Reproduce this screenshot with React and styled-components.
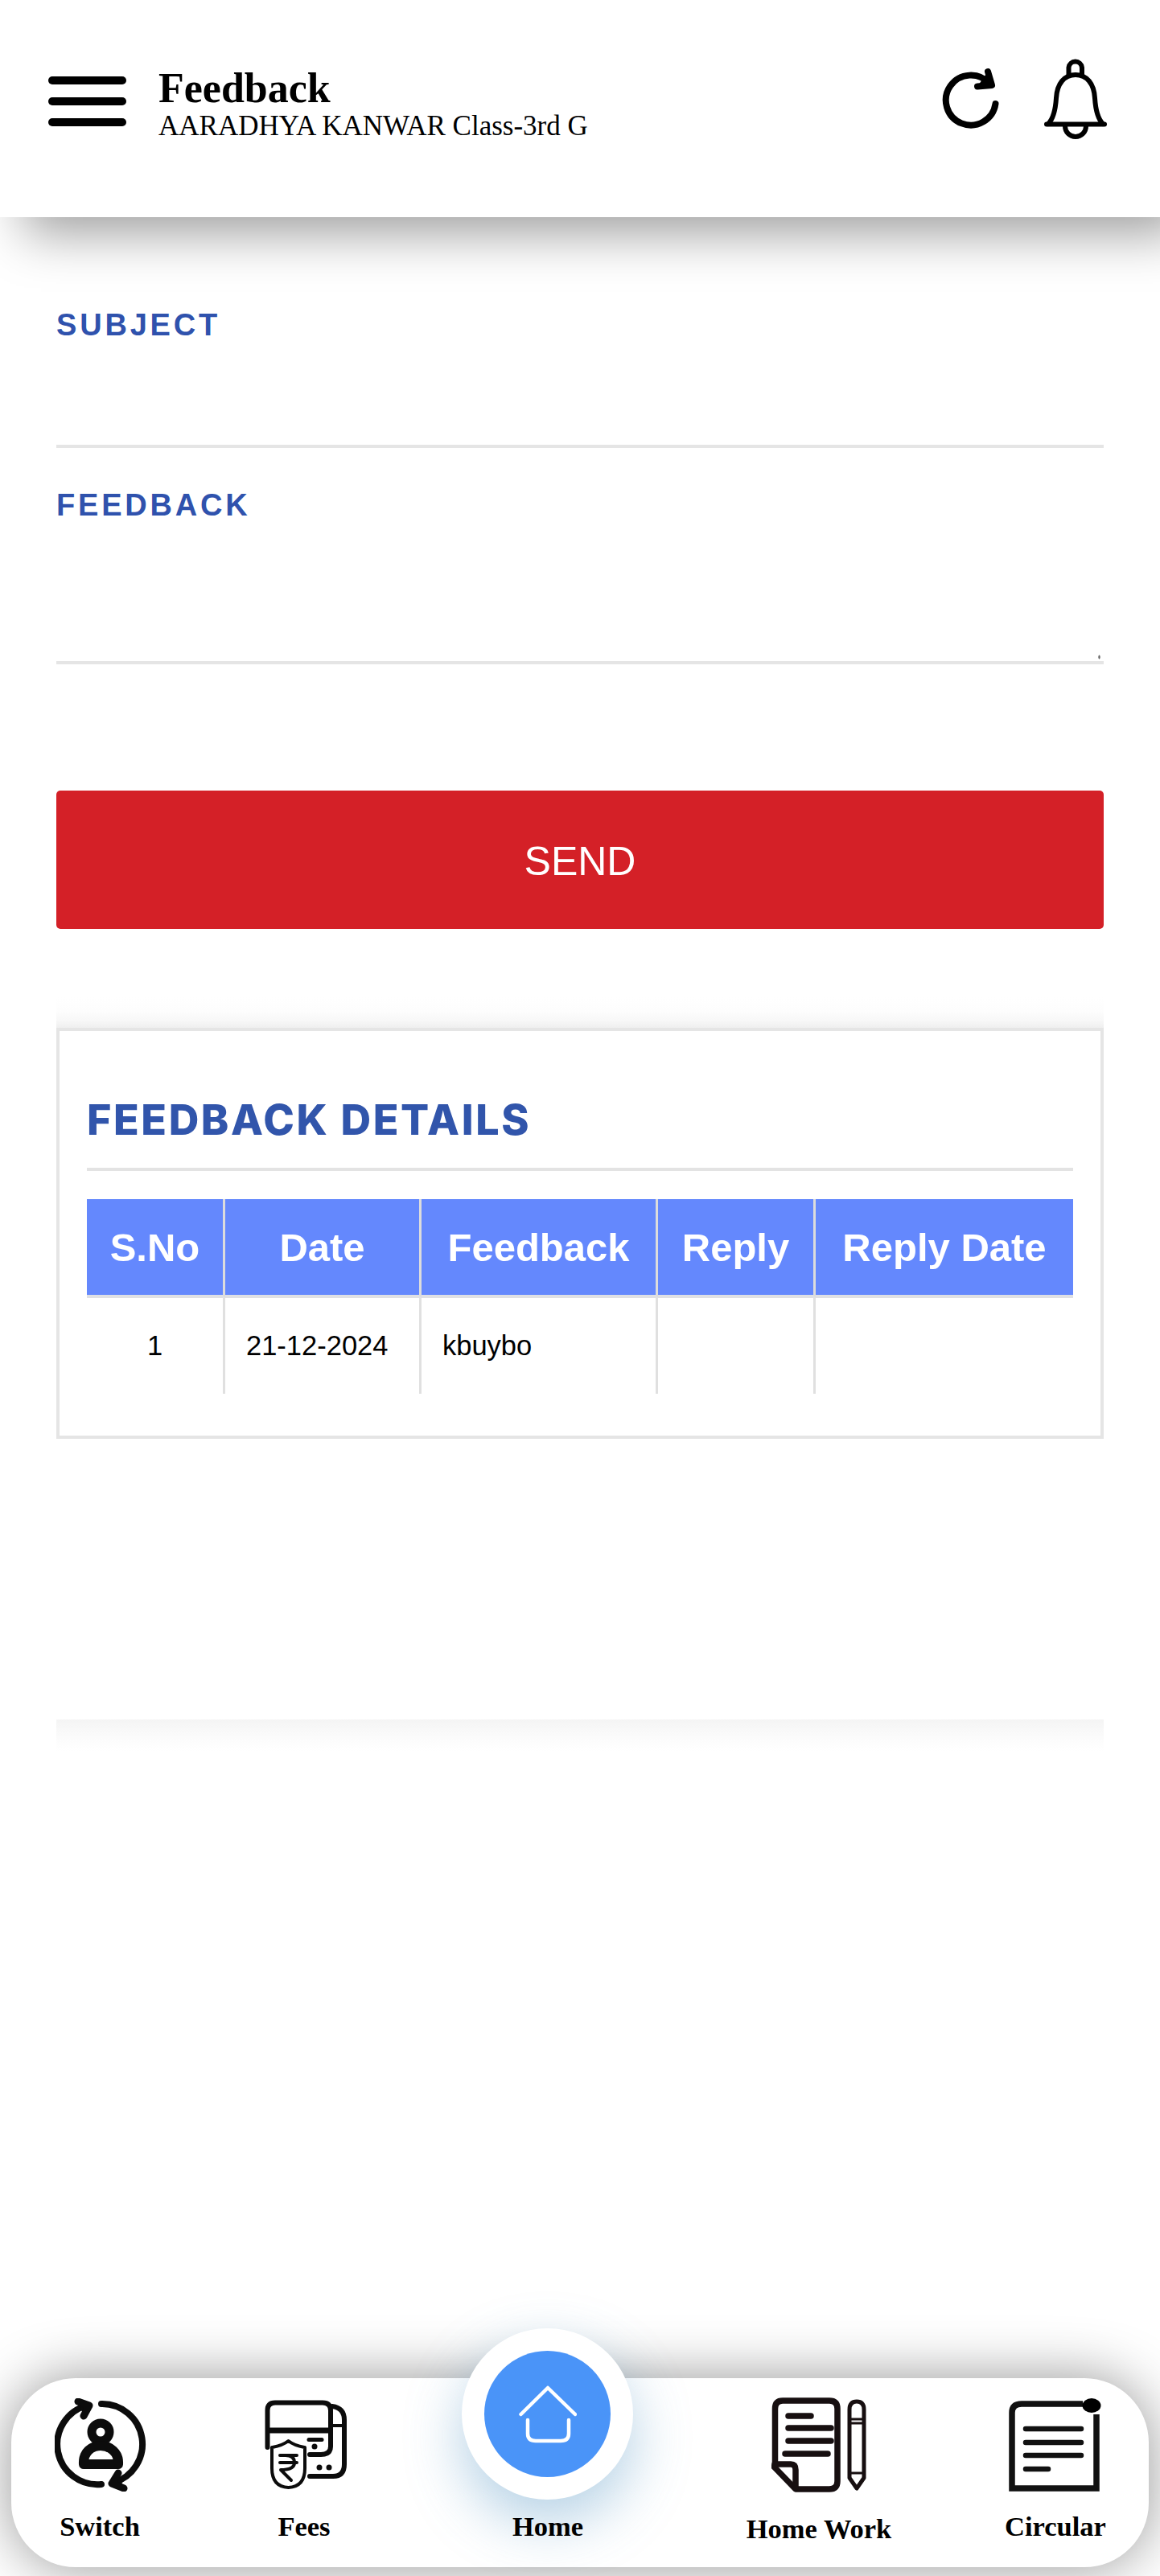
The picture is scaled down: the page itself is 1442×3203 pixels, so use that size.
import React from 'react';
import styled, { createGlobalStyle } from 'styled-components';

const GlobalStyle = createGlobalStyle`
  html, body {
    margin: 0;
    padding: 0;
    background: #fff;
  }
  * {
    box-sizing: border-box;
  }
`;

const Page = styled.div`
  display: flex;
  flex-direction: column;
  width: 1442px;
  height: 3203px;
  overflow: hidden;
  background: #fff;
  font-family: "Liberation Sans", Arial, sans-serif;
`;

const Header = styled.header`
  position: relative;
  z-index: 2;
  flex: none;
  display: flex;
  align-items: flex-start;
  height: 270px;
  padding: 0 63px 0 60px;
  background: #fff;
  box-shadow: 30px 20px 60px rgba(0, 0, 0, 0.38);
`;

const Burger = styled.div`
  display: flex;
  flex-direction: column;
  gap: 16px;
  width: 97px;
  margin-top: 95px;
`;

const BurgerBar = styled.span`
  display: block;
  height: 10px;
  border-radius: 5px;
  background: #000;
`;

const TitleBlock = styled.div`
  flex: 1;
  margin: 81px 0 0 40px;
  font-family: "Liberation Serif", "Times New Roman", serif;
  color: #000;
`;

const Title = styled.div`
  font-size: 52px;
  font-weight: 700;
  line-height: 58px;
`;

const Subtitle = styled.div`
  font-size: 35px;
  line-height: 40px;
  margin-top: -2px;
`;

const HeaderIcons = styled.div`
  display: flex;
  align-items: flex-start;
  gap: 50px;
  margin-top: 70px;
`;

const HeaderIcon = styled.svg`
  display: block;
  margin-top: ${(p) => p.$top || 0}px;
  fill: none;
  stroke: #000;
  stroke-linecap: round;
  stroke-linejoin: round;
`;

const FormArea = styled.main`
  flex: 1;
  display: flex;
  flex-direction: column;
  padding: 0 70px;
`;

const FieldLabel = styled.label`
  display: block;
  height: 44px;
  margin-top: ${(p) => p.$top}px;
  font-size: 38px;
  line-height: 44px;
  font-weight: 700;
  letter-spacing: 3.8px;
  color: #2f52ad;
`;

const TextInput = styled.input`
  display: block;
  width: 100%;
  height: 131px;
  padding: 0;
  border: 0;
  border-bottom: 4px solid #e5e5e5;
  outline: none;
  background: transparent;
`;

const TextArea = styled.textarea`
  display: block;
  width: 100%;
  height: 176px;
  padding: 0;
  border: 0;
  border-bottom: 4px solid #e5e5e5;
  outline: none;
  background: transparent;

  &::-webkit-resizer {
    background: radial-gradient(ellipse at center, #666 35%, transparent 75%) no-repeat 8px 7px / 3px 6px;
  }
`;

const SendButton = styled.button`
  display: block;
  width: 100%;
  height: 172px;
  margin-top: 157px;
  padding: 3px 0 0;
  border: 0;
  border-radius: 5px;
  background: #d42027;
  color: #fff;
  font-family: inherit;
  font-size: 50px;
`;

const ShadowBand = styled.section`
  height: 938px;
  margin-top: 85px;
  padding-top: 38px;
  background:
    linear-gradient(to bottom, #fff, #fdfdfd 45%, #f8f8f8 75%, #efefef) top / 100% 38px no-repeat,
    linear-gradient(to top, #fff, #fcfcfc 35%, #f8f8f8 70%, #f4f4f4) bottom / 100% 40px no-repeat;
`;

const Card = styled.div`
  height: 511px;
  padding: 0 34px;
  border: 4px solid #e5e5e5;
  background: #fff;
`;

const CardTitle = styled.h2`
  height: 174px;
  margin: 0;
  padding-top: 81px;
  border-bottom: 4px solid #e3e3e3;
  font-family: Inter, "Liberation Sans", sans-serif;
  font-size: 52px;
  line-height: 60px;
  font-weight: 800;
  letter-spacing: 2.6px;
  white-space: nowrap;
  color: #3155ab;
`;

const Table = styled.table`
  width: 1226px;
  margin-top: 35px;
  border-collapse: separate;
  border-spacing: 0;
  table-layout: fixed;
`;

const HeadCell = styled.th`
  width: ${(p) => p.$width}px;
  height: 123px;
  padding: 0;
  border-right: ${(p) => (p.$last ? 0 : 3)}px solid #dcdcdc;
  border-bottom: 4px solid #dfe0e4;
  background: #6488fd;
  color: #fff;
  font-size: 49px;
  font-weight: 700;
  text-align: center;
`;

const BodyCell = styled.td`
  height: 119px;
  padding: ${(p) => (p.$center ? 0 : '0 0 0 26px')};
  border-right: ${(p) => (p.$last ? 0 : 3)}px solid #e0e0e0;
  color: #000;
  font-size: 34.5px;
  text-align: ${(p) => (p.$center ? 'center' : 'left')};
`;

const BottomNav = styled.nav`
  position: relative;
  flex: none;
  display: grid;
  grid-template-columns: 220px 288px 318px 356px 232px;
  height: 235px;
  margin: 0 14px 11px;
  padding-top: 24px;
  border-radius: 80px;
  background: #fff;
  box-shadow: 0 0 70px rgba(0, 0, 0, 0.42);
`;

const NavItem = styled.div`
  position: relative;
  display: flex;
  flex-direction: column;
  align-items: center;
`;

const NavIconSlot = styled.div`
  display: flex;
  align-items: center;
  justify-content: center;
  height: 118px;
  padding-left: ${(p) => p.$nudge || 0}px;
`;

const NavIcon = styled.svg`
  display: block;
  fill: none;
  stroke: ${(p) => p.$color || '#0c0c0c'};
  stroke-linecap: round;
  stroke-linejoin: round;
`;

const NavLabel = styled.span`
  position: relative;
  padding-top: ${(p) => 22 + (p.$shift || 0)}px;
  font-family: "Liberation Serif", "Times New Roman", serif;
  font-size: 34.5px;
  line-height: 40px;
  font-weight: 700;
  color: #000;
`;

const HomeRing = styled.div`
  position: absolute;
  top: -86px;
  left: 52px;
  display: flex;
  align-items: center;
  justify-content: center;
  width: 213px;
  height: 213px;
  border-radius: 50%;
  background: #fff;
  box-shadow: 0 28px 70px rgba(70, 140, 190, 0.4);
`;

const HomeDisc = styled.div`
  display: flex;
  align-items: center;
  justify-content: center;
  width: 157px;
  height: 157px;
  border-radius: 50%;
  background: #4a94f8;
`;

function RefreshIcon() {
  return (
    <HeaderIcon $top={10} width="75" height="80" viewBox="0 0 75 80" strokeWidth="8">
      <path d="M67.5 49A31 31 0 1 1 60 24" />
      <path d="M58 9L63 26L45 27.5" fill="#000" />
    </HeaderIcon>
  );
}

function BellIcon() {
  return (
    <HeaderIcon width="84" height="104" viewBox="0 0 84 104" strokeWidth="6">
      <path d="M33.5 24V14A8.3 8.3 0 0 1 50 14V24" />
      <path d="M8 84C14 78 17 68 18 52C19 34 28 23 42 23C56 23 65 34 66 52C67 68 70 78 76 84" />
      <path d="M6 84.5H78" />
      <path d="M29 87A13 13 0 0 0 55 87" />
    </HeaderIcon>
  );
}

function SwitchIcon() {
  return (
    <NavIcon width="115" height="116" viewBox="0 0 115 116" strokeWidth="8">
      <path d="M58 7A50 50 0 0 1 73 105" />
      <path d="M58 107A50 50 0 0 1 40 9" />
      <path d="M29 4L43 9L36 22" strokeWidth="9" fill="#0c0c0c" />
      <path d="M86 112L71 106L79 93" strokeWidth="9" fill="#0c0c0c" />
      <circle cx="57" cy="42" r="11" strokeWidth="11" />
      <path d="M36 82C35 67 46 59 57 59C68 59 80 67 79 82Z" strokeWidth="12" />
    </NavIcon>
  );
}

function FeesIcon() {
  return (
    <NavIcon width="102" height="112" viewBox="0 0 102 112" strokeWidth="6">
      <path d="M3.5 59V13Q3.5 3.5 13 3.5H72Q82 3.5 82 13V58Q82 68 70 68H56" />
      <path d="M3.5 38H82" strokeWidth="7" strokeLinecap="butt" />
      <path d="M84 8Q99 10 99 25V80Q99 95 85 95H56" />
      <path d="M82 32H99" strokeWidth="4" />
      <path d="M55 49.5H71" strokeWidth="5" />
      <circle cx="62" cy="58" r="3.5" fill="#0c0c0c" stroke="none" />
      <circle cx="68" cy="84" r="3.5" fill="#0c0c0c" stroke="none" />
      <circle cx="80" cy="84" r="3.5" fill="#0c0c0c" stroke="none" />
      <path d="M29.5 51C22 57 15 58 9 59V85Q9 108 29.5 109Q50 108 50 85V59C44 58 37 57 29.5 51Z" fill="#fff" strokeWidth="4" />
      <path d="M19 69H40M19 78H40M26 69Q37 69 37 78Q37 87 20 87L33 100" strokeWidth="4" fill="none" />
    </NavIcon>
  );
}

function HomeIcon() {
  return (
    <NavIcon width="72" height="72" viewBox="0 0 72 72" strokeWidth="4.5" $color="#fff">
      <path d="M2.5 36L36 3L70 36" />
      <path d="M11 43V60Q11 69 21 69H52Q62 69 62 60V43" />
    </NavIcon>
  );
}

function HomeWorkIcon() {
  return (
    <NavIcon width="118" height="118" viewBox="0 0 118 118" strokeWidth="7.5" $color="#170f10">
      <path d="M4.5 83V14Q4.5 4 14 4H72Q82 4 82 14V104Q82 114 72 114H30L3 86" />
      <path d="M4 83H24Q30 83 30 90V112" />
      <path d="M21 23H49M21 38H74M21 54H74M17 70H70" />
      <path d="M97 100V15Q97 5 106 5Q115 5 115 15V100L106 113Z" strokeWidth="5" />
      <path d="M97 27H115M97 32H115M97 94H115" strokeWidth="3" />
    </NavIcon>
  );
}

function CircularIcon() {
  return (
    <NavIcon width="116" height="116" viewBox="0 0 116 116" strokeWidth="7.5" $color="#111">
      <path d="M92 7H16Q4 7 4 18V112H109V20" strokeLinecap="butt" strokeLinejoin="miter" />
      <path d="M21 38H90M21 55H90M21 71H90M21 88H49" strokeWidth="6.5" />
      <ellipse cx="103" cy="9" rx="11.5" ry="9" fill="#000" stroke="none" />
    </NavIcon>
  );
}

const navItems = [
  { label: 'Switch', icon: <SwitchIcon />, nudge: 3 },
  { label: 'Fees', icon: <FeesIcon />, nudge: 3 },
  { label: 'Home', home: true },
  { label: 'Home Work', icon: <HomeWorkIcon />, shift: 3 },
  { label: 'Circular', icon: <CircularIcon /> },
];

const columns = [
  { title: 'S.No', width: 172, value: '1', center: true },
  { title: 'Date', width: 244, value: '21-12-2024' },
  { title: 'Feedback', width: 294, value: 'kbuybo' },
  { title: 'Reply', width: 196, value: '' },
  { title: 'Reply Date', width: 320, value: '', last: true },
];

export default function App() {
  return (
    <Page>
      <GlobalStyle />
      <Header>
        <Burger>
          <BurgerBar />
          <BurgerBar />
          <BurgerBar />
        </Burger>
        <TitleBlock>
          <Title>Feedback</Title>
          <Subtitle>AARADHYA KANWAR Class-3rd G</Subtitle>
        </TitleBlock>
        <HeaderIcons>
          <RefreshIcon />
          <BellIcon />
        </HeaderIcons>
      </Header>

      <FormArea>
        <FieldLabel $top={112}>SUBJECT</FieldLabel>
        <TextInput type="text" />
        <FieldLabel $top={49}>FEEDBACK</FieldLabel>
        <TextArea />
        <SendButton>SEND</SendButton>

        <ShadowBand>
          <Card>
            <CardTitle>FEEDBACK DETAILS</CardTitle>
            <Table>
              <thead>
                <tr>
                  {columns.map((c) => (
                    <HeadCell key={c.title} $width={c.width} $last={c.last}>{c.title}</HeadCell>
                  ))}
                </tr>
              </thead>
              <tbody>
                <tr>
                  {columns.map((c) => (
                    <BodyCell key={c.title} $center={c.center} $last={c.last}>{c.value}</BodyCell>
                  ))}
                </tr>
              </tbody>
            </Table>
          </Card>
        </ShadowBand>
      </FormArea>

      <BottomNav>
        {navItems.map((item) => (
          <NavItem key={item.label}>
            {item.home && (
              <HomeRing>
                <HomeDisc>
                  <HomeIcon />
                </HomeDisc>
              </HomeRing>
            )}
            <NavIconSlot $nudge={item.nudge}>{item.icon}</NavIconSlot>
            <NavLabel $shift={item.shift}>{item.label}</NavLabel>
          </NavItem>
        ))}
      </BottomNav>
    </Page>
  );
}
